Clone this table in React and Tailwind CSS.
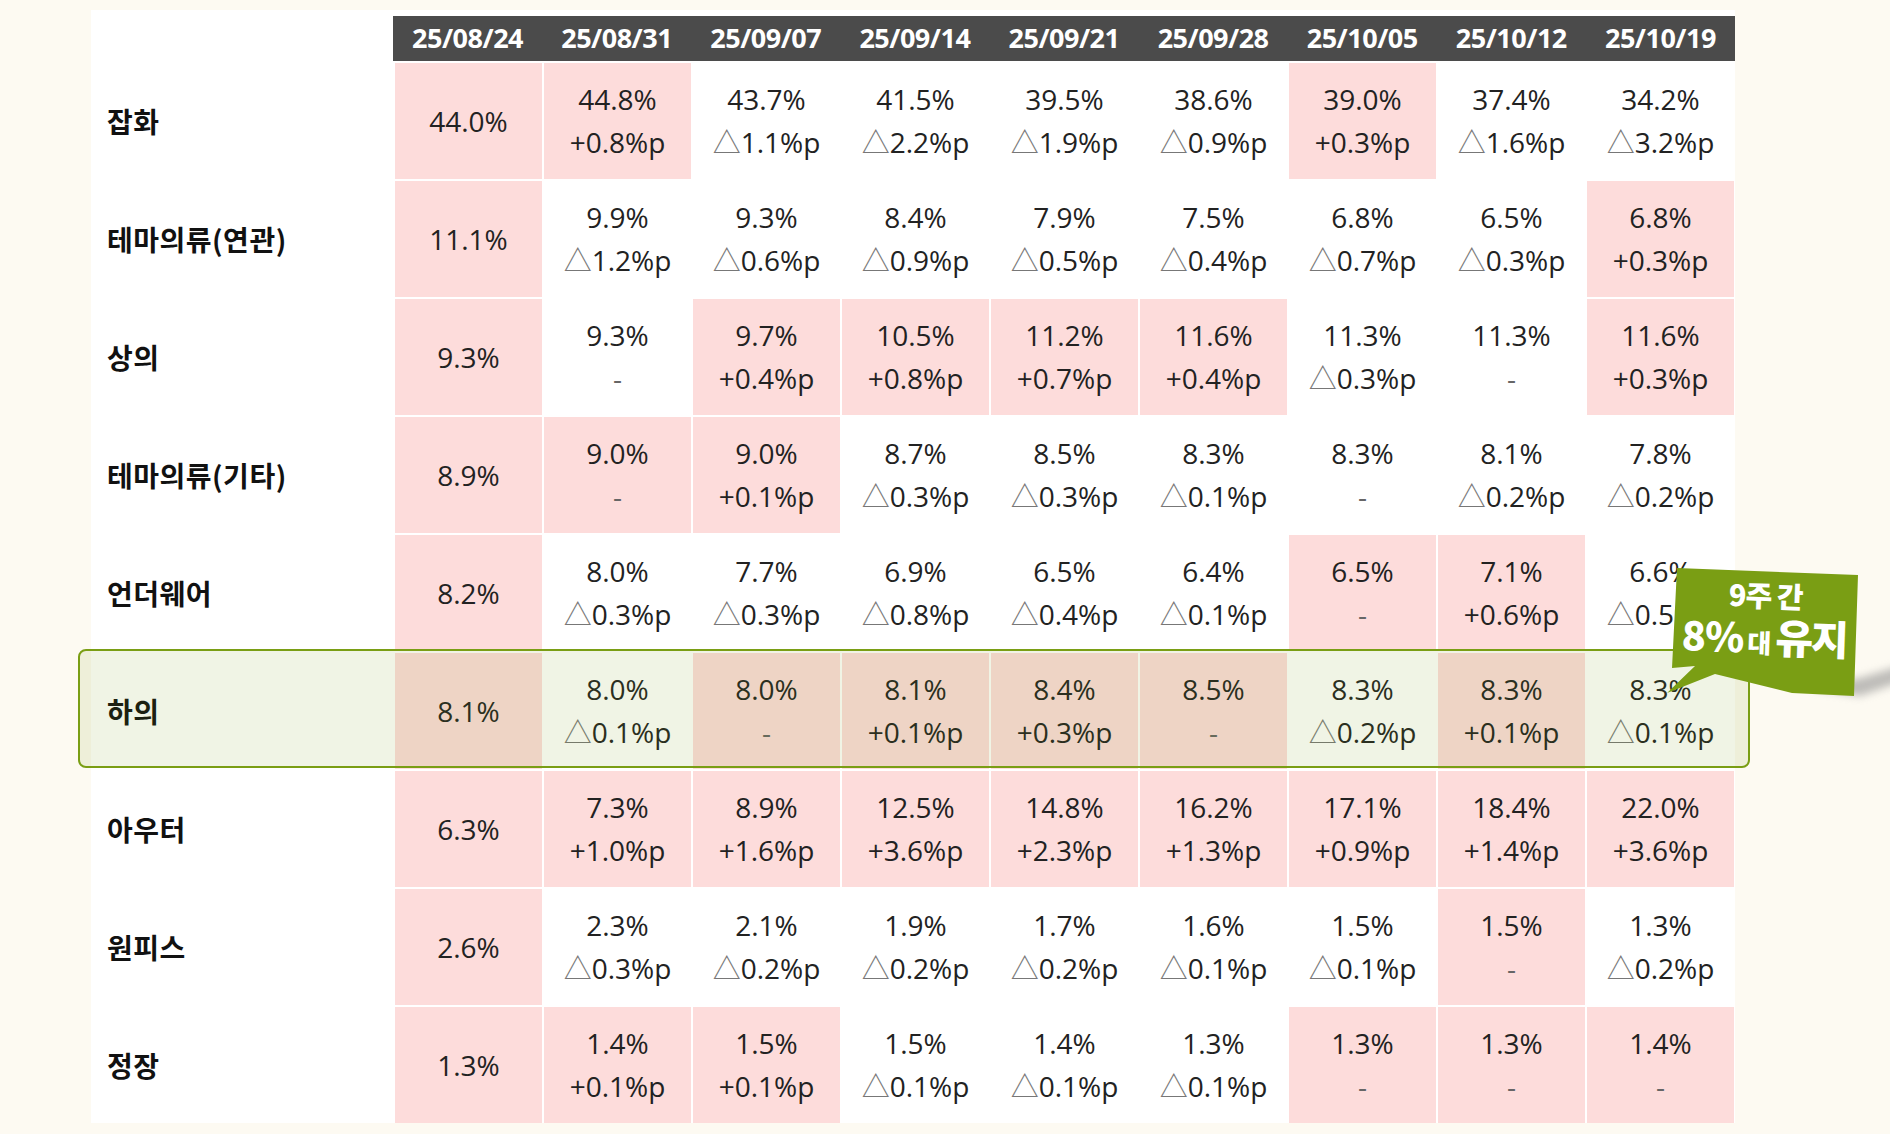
import React from "react";

const dates = ["25/08/24", "25/08/31", "25/09/07", "25/09/14", "25/09/21", "25/09/28", "25/10/05", "25/10/12", "25/10/19"];

// [value, delta, pink]
const rows = [
  {
    label: "잡화",
    cells: [
      ["44.0%", null, 1], ["44.8%", "+0.8%p", 1], ["43.7%", "△1.1%p", 0], ["41.5%", "△2.2%p", 0], ["39.5%", "△1.9%p", 0],
      ["38.6%", "△0.9%p", 0], ["39.0%", "+0.3%p", 1], ["37.4%", "△1.6%p", 0], ["34.2%", "△3.2%p", 0],
    ],
  },
  {
    label: "테마의류(연관)",
    cells: [
      ["11.1%", null, 1], ["9.9%", "△1.2%p", 0], ["9.3%", "△0.6%p", 0], ["8.4%", "△0.9%p", 0], ["7.9%", "△0.5%p", 0],
      ["7.5%", "△0.4%p", 0], ["6.8%", "△0.7%p", 0], ["6.5%", "△0.3%p", 0], ["6.8%", "+0.3%p", 1],
    ],
  },
  {
    label: "상의",
    cells: [
      ["9.3%", null, 1], ["9.3%", "-", 0], ["9.7%", "+0.4%p", 1], ["10.5%", "+0.8%p", 1], ["11.2%", "+0.7%p", 1],
      ["11.6%", "+0.4%p", 1], ["11.3%", "△0.3%p", 0], ["11.3%", "-", 0], ["11.6%", "+0.3%p", 1],
    ],
  },
  {
    label: "테마의류(기타)",
    cells: [
      ["8.9%", null, 1], ["9.0%", "-", 1], ["9.0%", "+0.1%p", 1], ["8.7%", "△0.3%p", 0], ["8.5%", "△0.3%p", 0],
      ["8.3%", "△0.1%p", 0], ["8.3%", "-", 0], ["8.1%", "△0.2%p", 0], ["7.8%", "△0.2%p", 0],
    ],
  },
  {
    label: "언더웨어",
    cells: [
      ["8.2%", null, 1], ["8.0%", "△0.3%p", 0], ["7.7%", "△0.3%p", 0], ["6.9%", "△0.8%p", 0], ["6.5%", "△0.4%p", 0],
      ["6.4%", "△0.1%p", 0], ["6.5%", "-", 1], ["7.1%", "+0.6%p", 1], ["6.6%", "△0.5%p", 0],
    ],
  },
  {
    label: "하의",
    cells: [
      ["8.1%", null, 1], ["8.0%", "△0.1%p", 0], ["8.0%", "-", 1], ["8.1%", "+0.1%p", 1], ["8.4%", "+0.3%p", 1],
      ["8.5%", "-", 1], ["8.3%", "△0.2%p", 0], ["8.3%", "+0.1%p", 1], ["8.3%", "△0.1%p", 0],
    ],
  },
  {
    label: "아우터",
    cells: [
      ["6.3%", null, 1], ["7.3%", "+1.0%p", 1], ["8.9%", "+1.6%p", 1], ["12.5%", "+3.6%p", 1], ["14.8%", "+2.3%p", 1],
      ["16.2%", "+1.3%p", 1], ["17.1%", "+0.9%p", 1], ["18.4%", "+1.4%p", 1], ["22.0%", "+3.6%p", 1],
    ],
  },
  {
    label: "원피스",
    cells: [
      ["2.6%", null, 1], ["2.3%", "△0.3%p", 0], ["2.1%", "△0.2%p", 0], ["1.9%", "△0.2%p", 0], ["1.7%", "△0.2%p", 0],
      ["1.6%", "△0.1%p", 0], ["1.5%", "△0.1%p", 0], ["1.5%", "-", 1], ["1.3%", "△0.2%p", 0],
    ],
  },
  {
    label: "정장",
    cells: [
      ["1.3%", null, 1], ["1.4%", "+0.1%p", 1], ["1.5%", "+0.1%p", 1], ["1.5%", "△0.1%p", 0], ["1.4%", "△0.1%p", 0],
      ["1.3%", "△0.1%p", 0], ["1.3%", "-", 1], ["1.3%", "-", 1], ["1.4%", "-", 1],
    ],
  },
];

const Delta = ({ d }) => {
  if (d === "-") return <span className="text-[#666]">-</span>;
  if (d.startsWith("△"))
    return (
      <span>
        <span className="text-[#777]">△</span>
        {d.slice(1)}
      </span>
    );
  return <span>{d}</span>;
};

const Cell = ({ v, d, hot }) => (
  <div
    className={`flex h-[116px] flex-col items-center justify-center text-[28px] leading-[43px] text-[#222] ${
      hot ? "bg-[#fddcdb]" : "bg-white"
    }`}
  >
    <span>{v}</span>
    {d && <Delta d={d} />}
  </div>
);

const Callout = () => (
  <div className="absolute left-[1660px] top-[560px] h-[150px] w-[230px]">
    <svg width="230" height="150" className="absolute inset-0">
      <defs>
        <filter id="blur" x="-20%" y="-50%" width="140%" height="200%">
          <feGaussianBlur stdDeviation="4" />
        </filter>
      </defs>
      {/* shadow */}
      <polygon points="150,128 200,118 240,106 240,122 200,136" fill="#8a8a8a" opacity="0.55" filter="url(#blur)" />
      <polygon
        points="17,8 198,15 194,136 132,133 55,114 7,133 35,106 12,108"
        fill="#7a9e14"
      />
    </svg>
    <div
      className="absolute left-[14px] top-[20px] flex w-[182px] rotate-[2deg] flex-col items-center font-black leading-none text-white"
      style={{ fontFamily: '"Noto Sans CJK KR", sans-serif' }}
    >
      <span className="text-[29px] tracking-[-1px]">9주 간</span>
      <span className="mt-[6px] flex items-baseline gap-[4px]">
        <span className="text-[40px] tracking-[-1px]">8%</span>
        <span className="text-[26px]">대</span>
        <span className="text-[41px] tracking-[-2px]">유지</span>
      </span>
    </div>
  </div>
);

export default function App() {
  return (
    <div
      className="relative h-[1134px] w-[1890px] overflow-hidden bg-[#fdfaf2]"
      style={{ fontFamily: '"Open Sans", "Noto Sans CJK KR", sans-serif' }}
    >
      <div className="relative ml-[91px] mt-[10px] w-[1644px] bg-white pt-[6px]">
        {/* header */}
        <div className="ml-[302px] grid h-[45px] w-[1342px] grid-cols-9 bg-[#4b4b4b]">
          {dates.map((d) => (
            <div key={d} className="flex items-center justify-center text-[27px] font-bold tracking-[-0.5px] text-white">
              {d}
            </div>
          ))}
        </div>

        {/* body */}
        <div className="mt-[2px] grid grid-cols-[302px_repeat(9,147px)] gap-[2px]">
          {rows.map((r) => (
            <React.Fragment key={r.label}>
              <div
                className="flex h-[116px] items-center pl-[16px] text-[28px] font-bold tracking-[0.5px] text-[#111]"
                style={{ fontFamily: '"Noto Sans CJK KR", sans-serif' }}
              >
                {r.label}
              </div>
              {r.cells.map((c, i) => (
                <Cell key={i} v={c[0]} d={c[1]} hot={c[2]} />
              ))}
            </React.Fragment>
          ))}
        </div>

        {/* highlighted row */}
        <div className="pointer-events-none absolute left-[-13px] top-[639px] h-[119px] w-[1672px] rounded-[8px] border-2 border-[#7a9e14] bg-[rgba(122,158,20,0.11)]" />
      </div>

      <Callout />
    </div>
  );
}
